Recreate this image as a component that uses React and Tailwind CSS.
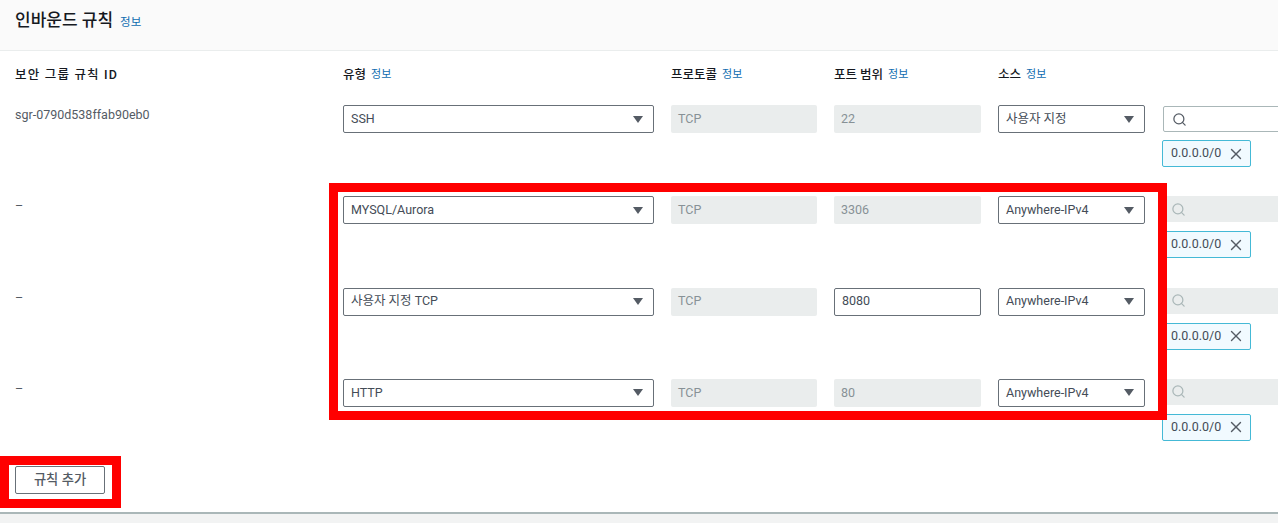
import React from 'react';
import { Search, X } from 'lucide-react';

const fontStack = "font-['Roboto','Noto_Sans_CJK_KR',sans-serif]";

const rules = [
  { id: 'sgr-0790d538ffab90eb0', type: 'SSH', port: '22', source: '사용자 지정', searchOff: false, portOff: true },
  { id: '–', type: 'MYSQL/Aurora', port: '3306', source: 'Anywhere-IPv4', searchOff: true, portOff: true },
  { id: '–', type: '사용자 지정 TCP', port: '8080', source: 'Anywhere-IPv4', searchOff: true, portOff: false },
  { id: '–', type: 'HTTP', port: '80', source: 'Anywhere-IPv4', searchOff: true, portOff: true },
];

const Label = ({ children, info = true, className }) => (
  <div className={`flex shrink-0 items-center text-[12.5px] font-medium leading-4 text-[#16191f] ${className}`}>
    {children}
    {info && <span className="ml-[5px] text-[11px] font-normal text-[#0f6cb0]">정보</span>}
  </div>
);

const FakeSelect = ({ value, className }) => (
  <div className={`flex h-[28px] shrink-0 items-center justify-between rounded-[2px] border border-[#687078] bg-white pl-[7px] pr-[10px] text-[12.5px] text-[#444c57] ${className}`}>
    <span>{value}</span>
    <span className="h-0 w-0 border-x-[5px] border-t-[7px] border-x-transparent border-t-[#545b64]" />
  </div>
);

const ReadOnly = ({ value, className }) => (
  <div className={`flex h-[28px] shrink-0 items-center rounded-[2px] bg-[#eaeded] pl-[7px] text-[12.5px] text-[#879196] ${className}`}>{value}</div>
);

const Row = ({ rule }) => (
  <div className="flex h-[91.3px] items-start">
    <div className="w-[328px] shrink-0 pt-[2px] text-[12.5px] leading-4 text-[#545b64]">{rule.id}</div>
    <FakeSelect value={rule.type} className="w-[311px]" />
    <ReadOnly value="TCP" className="ml-[17px] w-[146px]" />
    {rule.portOff ? (
      <ReadOnly value={rule.port} className="ml-[17px] w-[147px]" />
    ) : (
      <div className="ml-[17px] flex h-[28px] w-[147px] shrink-0 items-center rounded-[2px] border border-[#687078] bg-white pl-[7px] text-[12.5px] text-[#444c57]">
        {rule.port}
      </div>
    )}
    <FakeSelect value={rule.source} className="ml-[17px] w-[147px]" />
    <div className="ml-[18px] w-[140px] shrink-0">
      <div className={`flex h-[26px] items-center rounded-[2px] pl-2 ${rule.searchOff ? 'bg-[#eaeded] text-[#aab7b8]' : 'mt-px border border-[#aab7b8] bg-white text-[#545b64]'}`}>
        <Search size={15} strokeWidth={2} />
      </div>
      <div className={`${rule.searchOff ? 'mt-[9px]' : 'mt-2'} flex h-[27px] w-[89px] -translate-x-px items-center justify-between rounded-[2px] border border-[#44b9d6] bg-[#f1faff] pl-2 pr-[5px] text-[12.5px] text-[#444c57]`}>
        <span>0.0.0.0/0</span>
        <X size={18} strokeWidth={1.8} className="text-[#545b64]" />
      </div>
    </div>
  </div>
);

export default function App() {
  return (
    <div className={`relative flex h-[523px] w-[1278px] flex-col overflow-hidden bg-white ${fontStack}`}>
      <div className="flex h-[51px] items-start border-b border-[#eaeded] bg-[#fafafa] pl-[15px] pt-[10px]">
        <span className="text-[17px] font-medium leading-5 text-[#16191f]">인바운드 규칙</span>
        <span className="ml-[7px] mt-[4px] text-[11.5px] leading-4 text-[#0f6cb0]">정보</span>
      </div>

      <div className="flex pl-[15px] pt-[16px]">
        <Label info={false} className="w-[328px] tracking-[1.2px]">보안 그룹 규칙 ID</Label>
        <Label className="w-[328px]">유형</Label>
        <Label className="w-[163px]">프로토콜</Label>
        <Label className="w-[164px]">포트 범위</Label>
        <Label className="w-[164px]">소스</Label>
      </div>

      <div className="pl-[15px] pt-[22px]">
        {rules.map((rule, i) => (
          <Row key={i} rule={rule} />
        ))}
      </div>

      <div className="-mt-[4px] pl-[15px]">
        <button className="h-[28px] w-[90px] rounded-[2px] border border-[#687078] bg-white pb-px text-[13.3px] font-medium text-[#545b64]">
          규칙 추가
        </button>
      </div>

      <div className="mt-auto h-[11px] border-t-2 border-[#aab7b8] bg-[#f2f3f3]" />

      {/* red highlight boxes drawn over the screenshot */}
      <div className="absolute left-[329px] top-[183px] h-[237px] w-[838px] border-[9px] border-[#ff0000]" />
      <div className="absolute left-0 top-[456px] h-[52px] w-[121px] border-[9px] border-[#ff0000]" />
    </div>
  );
}
